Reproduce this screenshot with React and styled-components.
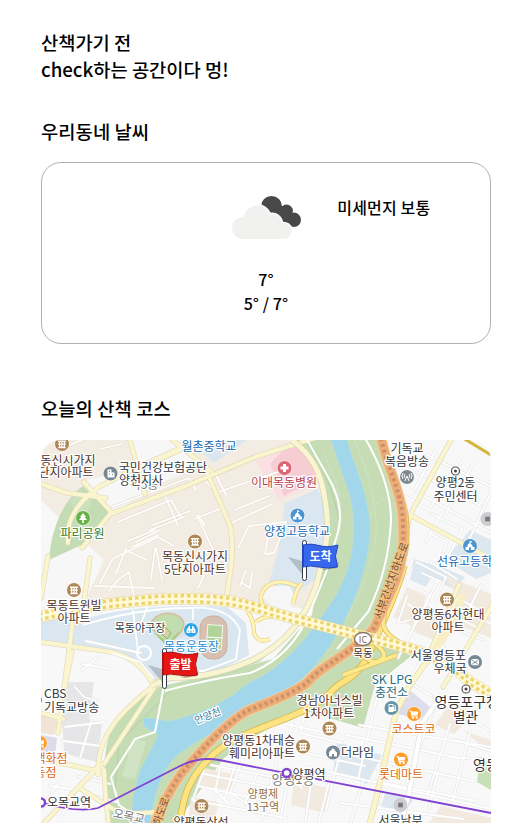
import React from 'react';
import styled, { createGlobalStyle } from 'styled-components';

const GlobalStyle = createGlobalStyle`
  * { box-sizing: border-box; }
  body {
    margin: 0;
    background: #fff;
    color: #000;
    font-family: 'Noto Sans CJK KR', 'Noto Sans', sans-serif;
    font-weight: 500;
  }
`;

const Page = styled.main`
  width: 531px;
  height: 823px;
  padding: 28px 40px 0 41px;
  overflow: hidden;
`;
const Intro = styled.h1`
  margin: 0;
  font-size: 18.72px;
  line-height: 27px;
  font-weight: 500;
`;
const Title = styled.h2`
  margin: ${(p) => p.$top}px 0 0;
  font-size: 18.72px;
  line-height: 27px;
  letter-spacing: 0.1px;
  font-weight: 500;
`;
const WeatherCard = styled.section`
  display: grid;
  grid-template-columns: repeat(3, minmax(0, 1fr));
  height: 182px;
  margin-top: 18px;
  border: 1px solid #b0b0b0;
  border-radius: 20px;
`;
const Current = styled.div`
  grid-column: 2;
  display: flex;
  flex-direction: column;
  align-items: center;
  padding-top: 18px;
`;
const CloudIcon = styled.svg`
  width: 100px;
  height: 75px;
`;
const Temperature = styled.p`
  margin: 0;
  font-size: 16px;
  line-height: 24px;
  letter-spacing: 0.1px;
`;
const TemperatureGroup = styled.div`
  margin-top: 11px;
  text-align: center;
`;
const Dust = styled.p`
  margin: 32px 0 0;
  padding-right: 63px;
  font-size: 16px;
  line-height: 24px;
  letter-spacing: 0.15px;
  white-space: nowrap;
  display: flex;
  justify-content: center;
`;
const MapFrame = styled.div`
  height: 383px;
  margin-top: 19px;
  border-radius: 20px 20px 0 0;
  overflow: hidden;
`;
const MapSvg = styled.svg`
  display: block;
  width: 450px;
  height: 383px;
`;
const Label = styled.text`
  font-family: 'Noto Sans CJK KR', sans-serif;
  font-size: ${(p) => p.$size || 12}px;
  font-weight: 400;
  text-anchor: ${(p) => p.$anchor || 'middle'};
  fill: ${(p) => p.$color || '#30373d'};
  stroke: ${(p) => p.$halo || '#fff'};
  stroke-width: 2.4px;
  stroke-linejoin: round;
  paint-order: stroke;
`;
const FlagLabel = styled.text`
  font-family: 'Noto Sans CJK KR', sans-serif;
  font-size: 12px;
  font-weight: 700;
  text-anchor: middle;
  fill: #fff;
`;

const BROWN = '#4d3229';
const BLUE = '#1768b3';
const ORANGE = '#e06b10';

const LABELS = [
  ['동신시가지', 68, 464.5, BROWN],
  ['단지아파트', 66, 477, BROWN],
  ['국민건강보험공단', 163, 472],
  ['목5동', 144, 488.5, '#777'],
  ['양천지사', 141, 485],
  ['월촌중학교', 209, 451, BLUE],
  ['파리공원', 82.5, 538, '#347a28'],
  ['이대목동병원', 284, 487, '#b9414d'],
  ['양정고등학교', 297, 536, BLUE],
  ['목동신시가지', 195, 561, BROWN],
  ['5단지아파트', 195, 574, BROWN],
  ['목동트윈빌', 74, 609.5, BROWN],
  ['아파트', 74, 622.5, BROWN],
  ['목동야구장', 140, 631.5, '#333d48', 11],
  ['목동운동장', 191.5, 650.5, '#218bd2'],
  ['기독교', 407, 453],
  ['복음방송', 407, 466],
  ['양평2동', 455.5, 487],
  ['주민센터', 455.5, 500.5],
  ['양평동6차현대', 448, 619, BROWN],
  ['아파트', 448, 632, BROWN],
  ['목동', 363, 656.5, BROWN, 10.5],
  ['SK LPG', 392, 684, '#286b83', 12.3],
  ['충전소', 391.5, 697, '#286b83'],
  ['별관', 465.5, 722, '#333', 13.5],
  ['코스트코', 413.5, 734, ORANGE],
  ['롯데마트', 401, 779, ORANGE],
  ['경남아너스빌', 329.5, 704.5, BROWN],
  ['1차아파트', 329, 717.5, BROWN],
  ['양평동1차태승', 258.5, 745, BROWN],
  ['훼미리아파트', 262, 758, BROWN],
  ['양평1동', 293, 783.5, '#777', 13],
  ['양평제', 263, 798, '#927143', 11],
  ['13구역', 263, 810.5, '#927143', 11],
  ['양평동삼성', 201, 826.5, BROWN],
  ['서울남부', 400.5, 824.5],
];
const LEFT_LABELS = [
  ['선유고등학교', 437, 566, BLUE],
  ['영등포구청', 434.5, 707, '#333', 14],
  ['영등포', 473, 770, '#333', 14],
  ['CBS', 44, 698],
  ['기독교방송', 44, 711.5],
  ['더라임', 341, 757],
  ['양평역', 292.5, 778.5, '#333'],
  ['오목교역', 47, 807, '#333'],
];
const RIGHT_LABELS = [
  ['서울영등포', 466, 660],
  ['우체국', 466.5, 673],
  ['백화점', 67.5, 763, ORANGE],
  ['동점', 56.5, 776.5, ORANGE],
];

const MAJOR = 'M39 617 Q90 604 150 600 Q190 597 228 601 C253 605 275 614 300 620 L397 645 Q446 657 468 680 L493 696';
const HIGHWAY = 'M381 438 C389 474 403 493 403 526 C405 571 393 587 374 628 C352 655 319 666 307 683 C287 697 258 706 247 711 C225 724 201 750 181 774 Q163 800 154 826';
const EXPRESS = 'M404 566 C398 590 380 630 366 660 C352 682 340 680 330 693 C299 723 235 727 207 761 C185 783 183 803 179 826';
const SIDE_EXPRESS = 'M379 438C386 474 407 488 408 526 409 548 405 560 402 572';
const RAMPS = 'M400 577C379 583 388 602 383 622C383 636 401 645 430 656M350 630Q361 663 377 662 395 655 367 639M343 675L397 655';
const RIVERSIDE = 'M292 440Q319 460 324 494C332 533 324 555 316 586 304 622 282 649 243 664Q209 678 169 678L151 686';
const LOOPS = 'M302 583Q296 588 293 604M297 586Q279 578 267 586 257 596 263 605L252 611M247 611Q254 619 254 633 258 644 270 639M256 622Q265 614 283 618';

const BEIGE_ROADS = [
  'M198 481L239 463M204 479L216 493M195 519L224 507M199 516L205 526M223 511L218 492 281 471',
  'M234 510L269 496M231 523L272 504M238 548L249 526 286 522 274 553 265 554 270 526',
  'M112 559L158 537 174 546M116 574L126 548M125 550L147 560M100 583L112 560M109 591L118 580 129 572 135 601',
  'M136 542L160 530M155 549L151 579M156 548L162 580M95 586L154 588M198 588L205 573M240 586L246 570M242 583L250 588 252 573',
  'M150 530L184 517M153 525L190 511M197 515L213 550M214 471L226 495M86 463L93 453M101 449L121 444M70 445L82 440',
  'M112 507L189 478 196 490M118 522L171 500 181 517M165 496L178 526M128 541L155 530M132 547L158 535',
];
const LOCAL_ROADS = [
  'M41 484 L67 493 106 498 M68 543 C65 516 82 499 99 487 L128 472 202 438',
  'M84 482 L112 513 M82 548 L110 514 186 486 255 457 315 438',
  'M132 471 L203 440 M145 494 L130 440 M170 438 L211 471',
  'M205 468 L230 525 C236 554 228 585 226 600',
  'M90 558 L84 602 M41 642 L104 651 Q136 654 153 684 M75 605 L58 733 M72 652 L62 700',
  'M48 556 L41 598',
  'M41 759 L98 771 M41 713 L63 719 M98 775 C96 731 128 707 153 686',
  'M104 770 Q105 798 109 826 M104 764 L160 679 M41 826 L100 765 M81 789 L121 814 160 812',
  'M452 438 L410 515 L493 560 M410 515 L403 545',
  'M493 604 L443 687 M459 585L431 650',
];
const MINOR_ROADS = [
  'M86 641 L141 653 M82 670 L98 657 M82 664 L110 669 M75 687 L84 697 97 701 M93 716 L80 758 M63 741 L101 746 M65 727 L105 722',
  'M110 784 L77 776 M83 779 L59 820 M94 796 L117 802 M61 779 L41 809 M50 786 L78 790',
  'M427 455 L492 487 M417 472 L481 506 M435 451 L415 489 M463 454 L431 507 M474 462 L446 514 M491 492 L469 540',
  'M417 492 L491 533 M405 496 L430 511 M430 513 L462 529 M442 513 L426 541 M462 530 L446 561 M430 534 L447 542 442 557',
  'M413 559 L402 580 M416 562 L446 577 436 599 M422 573 L441 582 M438 580 L398 658 M457 579 L430 562',
  'M407 596 L398 623 410 620 M408 604 L418 611 414 626 M417 589 L430 595 422 614 M481 585 L466 615',
  'M452 595 L491 616 M445 611 L480 629 M440 645 L462 661 M455 629 L484 640 M422 658 L403 696',
  'M380 684 L358 779 M359 725 L491 747 M410 683 L491 731',
  'M434 708 L407 782 M450 724 L428 794 M470 732 L451 808',
  'M346 735 L459 758 M351 755 L473 781 M330 772 L491 809 M306 753 L365 766 M307 767 L365 780 M339 757 L326 810',
  'M341 803 L463 819 M294 714 L284 758 M308 701 L300 733 342 743 M286 724 L331 734',
  'M211 765 L303 783 M204 774 L284 790 M198 786 L277 803 M192 800 L286 818 M247 747 L230 793 M267 748 L245 804',
  'M278 756 L262 820 M311 783 L305 825 M330 778 L318 826 M363 781 L351 822 M286 790 L279 826',
  'M207 762 L193 799 M220 768 L214 797 M235 765 L224 800 M286 775 L302 788 M230 793 L248 804 M214 789 L230 805',
  'M374 781 L476 801 M392 768 L381 803 M438 771 L429 809 M450 757 L491 760 M455 740 L491 751',
];

function RoadSet({ paths, width, color, edge }) {
  return (
    <g fill="none" strokeLinecap="round" strokeLinejoin="round">
      {paths.map((d) => <path key={`e${d}`} d={d} stroke={edge} strokeWidth={width + 1.2} />)}
      {paths.map((d) => <path key={d} d={d} stroke={color} strokeWidth={width} />)}
    </g>
  );
}

function Pin({ x, y, kind, color }) {
  return (
    <g transform={`translate(${x} ${y})`}>
      <circle r="7.6" fill="#fff" opacity=".8" />
      <circle r="7" fill={color} />
      <g fill="#fff" stroke="none">
        {kind === 'home' && <path d="M-4-3.5h8v1.5h-1v1.4h1V.8h-1v2.4h1v1h-8v-1h1V.8h-1V-.6h1V-2h-1z M-1.8-2v1.4h1.2V-2z M.6-2v1.4h1.2V-2z M-1.8.8v1.8h1.2V.8z M.6.8v1.8h1.2V.8z" fillRule="evenodd" />}
        {kind === 'school' && <path d="M-.5-5h2.2v1.6H.5v.8l2 2V.5L4.5 1.5V4H1V1.5h-2V4h-3.5V1.5L-2.5.5V-1l2-2z" />}
        {kind === 'cross' && <path d="M-1.5-4h3v2.5H4v3H1.5V4h-3V1.5H-4v-3h2.5z" />}
        {kind === 'tree' && <path d="M0-5L3-1H1.7L4 2H.8v3H-.8V2H-4l2.3-3H-3z" />}
        {kind === 'office' && <path d="M-3-4h4v3h3v5h-7z M-1.5-2.5v1h1v-1z M-1.5 0v1h1V0z M1.5.5v1h1v-1z" fillRule="evenodd" />}
        {kind === 'estate' && <path d="M-1-4.5L2.5-2.5h-1.2L4 0V4H1V1.5h-2V4h-3V0l1-1h-.8L-1-3z" />}
        {kind === 'stadium' && <path d="M-4.5 0L-2-4h1v3h2v-3h1L4.5 0v3h-4V.5h-1V3h-4z M-3 .5v1h1v-1z M2 .5v1h1v-1z" fillRule="evenodd" />}
        {kind === 'mail' && <path d="M-4-2.5L-1 0l-3 3zM4-2.5L1 0l3 3zM-3.5-3h7L0 0zM-3.5 3.2L-.7.7 0 1.2.7.7 3.5 3.2z" />}
        {kind === 'fuel' && <path d="M-3-4h5v3h1v2.7h.8v-3L2.5-3h1l1.2 1.5V3H2V0v4h-5z M-2-3v2h3v-2z" fillRule="evenodd" />}
      </g>
      {kind === 'cart' && (
        <g stroke="#fff" fill="none" strokeWidth="1.2">
          <path d="M-4.5-3h1.5l1 5h5.5" />
          <path d="M-2.5-1.8h6L3 .5h-5z" fill="#fff" />
          <circle cx="-1" cy="3.7" r=".5" /><circle cx="2.7" cy="3.7" r=".5" />
        </g>
      )}
      {kind === 'antenna' && (
        <g stroke="#fff" fill="none" strokeWidth="1">
          <path d="M0-1L-2 4M0-1L2 4M-2-3q-1.7 2 0 4M2-3q1.7 2 0 4M-4-4q-2.3 3 0 6M4-4q2.3 3 0 6" />
        </g>
      )}
    </g>
  );
}

function Flag({ x, y, color, edge, children }) {
  return (
    <g transform={`translate(${x} ${y})`}>
      <path d="M-15 17L-1 21V34Z" fill="#59636d" opacity=".3" />
      <path d="M4 23Q17 32 29 26L36 22 34 28 21 30Z" fill="#44524b" opacity=".4" />
      <rect x="-.5" y=".5" width="4" height="40" rx="2" fill="#fff" stroke="#30394b" />
      <path d="M0 5Q8 3 16 5.5T35 5L32.5 16 34.5 27Q25 29 16 27T0 27Z" fill={color} stroke={edge} />
      <path d="M0 5v22" stroke={edge} strokeWidth="2" />
      <FlagLabel x="17.5" y="20.5">{children}</FlagLabel>
    </g>
  );
}

function MapDrawing() {
  return (
    <MapSvg viewBox="41 440 450 383" role="img" aria-label="오늘의 산책 코스 지도">
      <rect x="41" y="440" width="450" height="383" fill="#f8f8f8" />
      <path d="M41 440H315L328 495 318 610 228 601 150 600 81 610 104 560 41 500Z" fill="#f3ece2" />
      <path d="M41 540L90 560 76 611 41 615Z M86 480L128 471 145 493 111 514Z M128 440H180L205 465 148 488Z" fill="#f7f7f8" />
      <path d="M188 440H247L214 463Z M285 503L318 489 330 521 324 573 293 595 269 583 278 552Z" fill="#dae7f0" />
      <path d="M254 458L292 442 315 455 318 484 279 500Z" fill="#fae0e2" />
      <path d="M270 464L289 444 312 451 318 478 284 496Z" fill="#f6cdd2" />
      <path d="M83 486L109 512 88 542 49 560C51 527 65 498 83 486Z" fill="#c4dcb4" />
      <path d="M70 500L80 491 92 499 88 512 76 514Z" fill="#d2e4c5" opacity=".6" />
      <path d="M82 620Q136 602 227 607L246 623 249 655 215 673 158 684 134 659 41 642V617Z" fill="#dae7f0" />
      <path d="M295 438H379C392 479 407 502 401 557L371 633 411 656 375 685 363 728 303 710 257 735 224 758 174 826H108C105 780 99 746 117 721L153 688 211 675 273 659 312 615 326 533 319 476Z" fill="#c5dcb5" />
      <path d="M305 440Q333 480 340 525L325 580Q299 627 260 661L171 690 119 743 115 790" fill="none" stroke="#b2cfa7" />
      <path d="M330 438Q341 470 350 497C358 534 352 570 333 600C308 636 288 665 248 683Q220 709 170 721L153 718H143V726L158 735 140 770Q132 792 130 826H150Q154 787 170 763 180 750 213 733L267 703C304 683 326 657 344 622 360 591 371 554 370 526 368 488 352 462 347 438Z" fill="#a2d6ea" stroke="#bfdfcb" />
      <path d="M354 439Q373 481 376 520 T346 620M323 453Q342 485 341 520L336 559M389 495L372 507 371 519" stroke="#d0e3c4" fill="none" />
      <path d="M133 738L146 742 135 779 122 776Z" fill="#d1e3c5" />
      <path d="M149 625Q158 610 174 614 188 619 182 631L167 646Z" fill="#c1dcae" stroke="#d6bc9e" strokeWidth="1.5" />
      <path d="M153 632L168 642 182 629 168 647Z" fill="#a3ce7a" />
      <path d="M165 627L171 633 167 639 161 633Z" fill="#d9cfa9" stroke="#83b872" />
      <rect x="200" y="616" width="27" height="43" rx="12" fill="#d7bfb1" stroke="#cbb0a1" />
      <rect x="207" y="625" width="15" height="24" transform="rotate(4 214 637)" fill="#b2d49b" stroke="#fff" strokeWidth=".8" />
      <path d="M207 637l15 1" stroke="#fff" />
      <path d="M66 682H94L89 719 102 724 97 762 81 758 64 753 62 719Z" fill="#e6e6e8" />
      <path d="M41 714L58 721 54 735 41 733Z" fill="#f1e4d7" />
      <path d="M41 735L57 738 54 764 41 758Z" fill="#dcdbea" />
      <path d="M414 559L436 566 426 587 410 580Z M470 530L491 540V573L476 579 445 560Z M434 564L465 577 455 590 430 577Z" fill="#dce7ef" />
      <path d="M407 587L426 596 416 628 393 617Z M444 575L491 594V622L465 610Z M463 610L491 625V638L453 623Z M452 700L474 714 454 734 435 725Z M462 730L491 740V753Z M421 603L450 616 445 645 410 630Z" fill="#f2eadf" />
      <path d="M411 691L430 707 421 720 398 714 402 699Z" fill="#deddeb" />
      <path d="M337 742L382 755 367 784 333 771Z M384 793L414 799 403 814 380 805Z" fill="#dce7ef" />
      <path d="M294 781L330 788 324 813 291 805Z M204 768L238 775 232 790 199 786Z M441 806L491 818V823H429Z M191 797L218 802 215 823H188Z" fill="#f2eadf" />
      <path d="M480 757L491 761V790L477 782Z" fill="#c8dfb8" />
      <RoadSet paths={BEIGE_ROADS} width={1.8} color="#fffefd" edge="#e8e0d5" />
      <RoadSet paths={MINOR_ROADS} width={1.8} color="#fff" edge="#e5e5e5" />
      <RoadSet paths={LOCAL_ROADS} width={4} color="#faf5ce" edge="#dfd9b5" />
      <path d={RIVERSIDE} fill="none" stroke="#d8d1a6" strokeWidth="6.2" />
      <path d={RIVERSIDE} fill="none" stroke="#f9f4d2" strokeWidth="5" />
      <path d="M165 691Q200 681 250 673 291 657 309 614L326 573 338 532Q345 505 327 475L307 440M365 438Q391 483 391 520 389 569 368 612L337 649M164 686L155 732 135 739 111 777 119 805 137 817" fill="none" stroke="#fff" strokeWidth="2" />
      <path d="M83 625Q140 608 188 608 229 605 240 630L236 659 203 671 162 672M133 610L138 652M148 605L142 621M193 608V620M111 653L140 662 154 679" fill="none" stroke="#fff" strokeWidth="1.8" />
      <circle cx="144" cy="653" r="7" fill="none" stroke="#fff" strokeWidth="2" />
      <path d="M263 597Q267 583 289 586L294 594 290 610 280 613ZM257 624L275 618 285 623 272 638 261 634Z" fill="#f6f6f6" />
      <g fill="none" strokeLinejoin="round">
        <path d={LOOPS} stroke="#e0cc75" strokeWidth="4.2" />
        <path d={LOOPS} stroke="#fff3b8" strokeWidth="3" />
      </g>
      <path d={SIDE_EXPRESS} fill="none" stroke="#e1ba4e" strokeWidth="3" />
      <path d={EXPRESS} fill="none" stroke="#d7b63d" strokeWidth="7" />
      <path d={EXPRESS} fill="none" stroke="#fee383" strokeWidth="5.5" />
      <path d={RAMPS} fill="none" stroke="#d6b74a" strokeWidth="5" />
      <path d={RAMPS} fill="none" stroke="#ffe98e" strokeWidth="3.7" />
      <path d={HIGHWAY} fill="none" stroke="#f7d4a1" strokeWidth="10.5" />
      <path d={HIGHWAY} fill="none" stroke="#edad78" strokeWidth="9" />
      <path d={HIGHWAY} fill="none" stroke="#cc9168" strokeWidth="4" strokeDasharray="3 3" />
      <path d={MAJOR} fill="none" stroke="#e2d59a" strokeWidth="11.5" />
      <path d={MAJOR} fill="none" stroke="#fff9d7" strokeWidth="10.5" />
      <g fill="none" stroke="#ecd36d" strokeWidth="3.3" strokeDasharray="3.5 3">
        <path d={MAJOR} transform="translate(0 -3)" />
        <path d={MAJOR} transform="translate(0 3)" />
      </g>
      <path d="M463 438L491 455" stroke="#d6b33b" strokeWidth="3" />
      <path d="M463 594L449 629 430 657" fill="none" stroke="#f8efc5" strokeWidth="7" />
      <path d="M430 657L410 685 396 712 376 799 369 826" fill="none" stroke="#e0d7ae" strokeWidth="6" />
      <path d="M430 657L410 685 396 712 376 799 369 826" fill="none" stroke="#fbf5cc" strokeWidth="4.8" />
      <path d="M442 695L422 723 409 793 400 826" fill="none" stroke="#ddd" strokeWidth="5.5" />
      <path d="M442 695L422 723 409 793 400 826" fill="none" stroke="#fff" strokeWidth="4.3" />
      <path d="M43 803Q78 813 98 808L176 768Q198 756 219 760L491 813" fill="none" stroke="#8141d1" strokeWidth="1.8" />
      <ellipse cx="363" cy="639" rx="8.5" ry="6.5" fill="#fff" stroke="#8b7369" strokeWidth="1.4" />
      <Label x="363" y="642.5" $size={9} $color="#8b5a50">IC</Label>
      <g transform="translate(395 582) rotate(-70)"><Label $size={11} $color="#7b492f" $halo="#efc184">서부간선지하도로</Label></g>
      <g transform="translate(163 817) rotate(-70)"><Label $size={10.5} $color="#7b492f" $halo="#efc184">지하도로</Label></g>
      <g transform="translate(209 719) rotate(-22)"><Label $size={10} $color="#337d9d">안양천</Label></g>
      <g transform="translate(128 820) rotate(12)"><Label $size={11.5} $color="#777">오목교</Label></g>
      {LABELS.map(([text, x, y, color, size]) => <Label key={`${text}${x}`} x={x} y={y} $color={color} $size={size}>{text}</Label>)}
      {LEFT_LABELS.map(([text, x, y, color, size]) => <Label key={text} x={x} y={y} $color={color} $size={size} $anchor="start">{text}</Label>)}
      {RIGHT_LABELS.map(([text, x, y, color, size]) => <Label key={text} x={x} y={y} $color={color} $size={size} $anchor="end">{text}</Label>)}
      {[[62, 444], [195, 541.5], [74, 590], [447, 599.5], [329.5, 728.5], [303, 746.5], [201.5, 806]].map(([x, y]) => <Pin key={`${x}${y}`} x={x} y={y} kind="home" color="#ae8756" />)}
      <Pin x={110.5} y={473.5} kind="office" color="#798793" />
      <Pin x={83} y={518} kind="tree" color="#69b247" />
      <Pin x={284.5} y={468} kind="cross" color="#d96575" />
      <Pin x={297.5} y={515.5} kind="school" color="#4c94cf" />
      <Pin x={470} y={546} kind="school" color="#4c94cf" />
      <Pin x={191} y={630} kind="stadium" color="#32a5e7" />
      <Pin x={407} y={477} kind="antenna" color="#7e8992" />
      <Pin x={475} y={662} kind="mail" color="#778994" />
      <Pin x={391.5} y={708} kind="fuel" color="#6694a7" />
      <Pin x={333} y={752.5} kind="estate" color="#788995" />
      <Pin x={414} y={714} kind="cart" color="#ff9e28" />
      <Pin x={401} y={759.5} kind="cart" color="#ff9e28" />
      <Pin x={40} y={743} kind="cart" color="#ff9e28" />
      <circle cx="37" cy="700" r="5" fill="#778995" />
      {[[455.5, 471], [466, 689]].map(([x, y]) => <g key={x}><circle cx={x} cy={y} r="4" fill="#fff" stroke="#555" strokeWidth="1.2" /><circle cx={x} cy={y} r="1.5" fill="#444" /></g>)}
      {[[487.5, 519], [400.5, 805]].map(([x, y]) => <g key={x}><circle cx={x} cy={y} r="7" fill="#ccccd1" /><rect x={x - 2.3} y={y - 2.3} width="4.6" height="4.6" fill="#777" /></g>)}
      {[[286.7, 773], [41, 802.5]].map(([x, y]) => <circle key={x} cx={x} cy={y} r="4" fill="#fff" stroke="#8141d1" strokeWidth="2.4" />)}
      <Flag x={303} y={540} color="#3767ed" edge="#2547bd">도착</Flag>
      <Flag x={163} y={648} color="#e51613" edge="#ac1615">출발</Flag>
    </MapSvg>
  );
}

export default function App() {
  return (
    <>
      <GlobalStyle />
      <Page>
        <Intro>산책가기 전<br />check하는 공간이다 멍!</Intro>
        <Title $top={35}>우리동네 날씨</Title>
        <WeatherCard>
          <Current>
            <CloudIcon viewBox="216 181 100 75" aria-label="흐림">
              <g fill="#48484a"><circle cx="271.5" cy="206.5" r="10.5" /><circle cx="286.5" cy="211" r="6.4" /><circle cx="293.8" cy="219.8" r="7.2" /><path d="M263 207L285 206 292 226 276 220Z" /></g>
              <path d="M242 239a10.5 10.5 0 0 1 2-22 13.5 13.5 0 0 1 26-3 10 10 0 0 1 12 9 8 8 0 0 1 3 16Z" fill="#f1f1f0" stroke="#fff" strokeWidth="2.4" paintOrder="stroke" />
            </CloudIcon>
            <TemperatureGroup>
              <Temperature>7°</Temperature>
              <Temperature>5° / 7°</Temperature>
            </TemperatureGroup>
          </Current>
          <Dust>미세먼지 보통</Dust>
        </WeatherCard>
        <Title $top={50}>오늘의 산책 코스</Title>
        <MapFrame><MapDrawing /></MapFrame>
      </Page>
    </>
  );
}
